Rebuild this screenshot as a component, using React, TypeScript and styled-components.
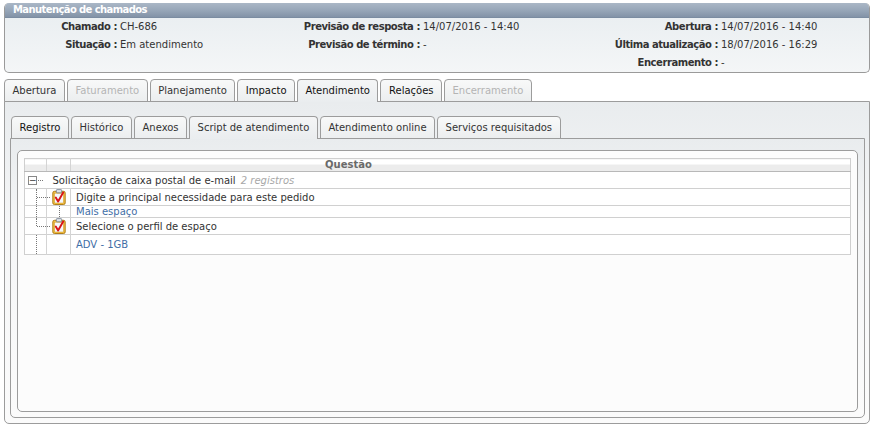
import React from 'react';
import styled, { createGlobalStyle, css } from 'styled-components';

const GlobalStyle = createGlobalStyle`
	html, body {
		margin: 0;
		padding: 0;
		background: #ffffff;
	}
	body {
		font-family: "DejaVu Sans", Verdana, sans-serif;
		font-size: 10px;
		color: #333;
	}
`;

type Field = { label: string; value: string };

const infoRows: Field[][] = [
	[
		{ label: 'Chamado :', value: 'CH-686' },
		{ label: 'Previsão de resposta :', value: '14/07/2016 - 14:40' },
		{ label: 'Abertura :', value: '14/07/2016 - 14:40' },
	],
	[
		{ label: 'Situação :', value: 'Em atendimento' },
		{ label: 'Previsão de término :', value: '-' },
		{ label: 'Última atualização :', value: '18/07/2016 - 16:29' },
	],
	[
		{ label: '', value: '' },
		{ label: '', value: '' },
		{ label: 'Encerramento :', value: '-' },
	],
];

type Tab = { title: string; active?: boolean; disabled?: boolean; strong?: boolean };

const mainTabs: Tab[] = [
	{ title: 'Abertura' },
	{ title: 'Faturamento', disabled: true },
	{ title: 'Planejamento' },
	{ title: 'Impacto', strong: true },
	{ title: 'Atendimento', active: true, strong: true },
	{ title: 'Relações', strong: true },
	{ title: 'Encerramento', disabled: true },
];

const subTabs: Tab[] = [
	{ title: 'Registro', strong: true },
	{ title: 'Histórico' },
	{ title: 'Anexos' },
	{ title: 'Script de atendimento', active: true },
	{ title: 'Atendimento online' },
	{ title: 'Serviços requisitados' },
];

function ClipboardIcon() {
	return (
		<svg width="14" height="16" viewBox="0 0 14 16">
			<rect x="0.8" y="2.3" width="12.4" height="13.2" rx="1.6" fill="#f2c044" stroke="#a8740c" strokeWidth="0.9" />
			<rect x="2.6" y="4.2" width="8.8" height="9.8" fill="#f4f8fd" stroke="#d39a26" strokeWidth="0.5" />
			<rect x="4.3" y="0.6" width="5.4" height="3.2" rx="0.8" fill="#dfe4ea" stroke="#6f7b8b" strokeWidth="0.8" />
			<path d="M3.8 8.6 L6.1 12.4 L11.2 3.6" fill="none" stroke="#d8141a" strokeWidth="1.9" strokeLinecap="round" strokeLinejoin="round" />
		</svg>
	);
}

function TabStrip({ tabs }: { tabs: Tab[] }) {
	return (
		<TabRow>
			{tabs.map(t => (
				<TabButton key={t.title} $active={t.active} $disabled={t.disabled} $strong={t.strong}>
					{t.title}
				</TabButton>
			))}
		</TabRow>
	);
}

export default function App(): JSX.Element {
	return (
		<Page>
			<GlobalStyle />
			<InfoPanel>
				<InfoHeader>Manutenção de chamados</InfoHeader>
				<InfoGrid>
					{infoRows.map((row, i) =>
						row.map((f, j) => (
							<React.Fragment key={`${i}-${j}`}>
								<FieldLabel>{f.label}</FieldLabel>
								<FieldValue>{f.value}</FieldValue>
							</React.Fragment>
						))
					)}
				</InfoGrid>
			</InfoPanel>

			<TabsBlock>
				<TabStrip tabs={mainTabs} />
				<OuterPanel>
					<TabStrip tabs={subTabs} />
					<InnerPanel>
						<ContentBox>
							<Grid>
								<thead>
									<tr>
										<HeadCell $w={21} />
										<HeadCell $w={23} />
										<HeadCell $offset={224}>Questão</HeadCell>
									</tr>
								</thead>
								<tbody>
									<GroupRow>
										<TreeCell>
											<Expander>−</Expander>
										</TreeCell>
										<GroupCell colSpan={2}>
											Solicitação de caixa postal de e-mail <Count>2 registros</Count>
										</GroupCell>
									</GroupRow>
									<DataRow $h={16}>
										<TreeCell $line="tee" />
										<IconCell><ClipboardIcon /></IconCell>
										<TextCell>Digite a principal necessidade para este pedido</TextCell>
									</DataRow>
									<DataRow $h={12}>
										<TreeCell $line="pipe" />
										<IconCell $link />
										<TextCell $answer>Mais espaço</TextCell>
									</DataRow>
									<DataRow $h={16}>
										<TreeCell $line="corner" />
										<IconCell><ClipboardIcon /></IconCell>
										<TextCell>Selecione o perfil de espaço</TextCell>
									</DataRow>
									<DataRow $h={20}>
										<TreeCell $line="pipe" />
										<IconCell />
										<TextCell $answer>ADV - 1GB</TextCell>
									</DataRow>
								</tbody>
							</Grid>
						</ContentBox>
					</InnerPanel>
				</OuterPanel>
			</TabsBlock>
		</Page>
	);
}

const Page = styled.div`
	padding: 3px 4px 6px 4px;
`;

const InfoPanel = styled.div`
	border: 1px solid #9a9a9a;
	border-top: none;
	border-radius: 5px;
	background: linear-gradient(#e8edf0, #f4f6f7);
	overflow: hidden;
`;

const InfoHeader = styled.div`
	height: 14px;
	line-height: 14px;
	padding-left: 8px;
	color: #fff;
	font-weight: bold;
	font-size: 10px;
	letter-spacing: -0.6px;
	background: linear-gradient(#aab7c6 0%, #98a7b9 50%, #8393a7 100%);
	border-bottom: 1px solid #7b8ca1;
`;

const InfoGrid = styled.div`
	display: grid;
	grid-template-columns: 112px 183px 120px 178px 120px 1fr;
	grid-auto-rows: 18px;
`;

const FieldLabel = styled.div`
	text-align: right;
	font-weight: bold;
	letter-spacing: -0.45px;
	color: #333;
	line-height: 18px;
	white-space: nowrap;
`;

const FieldValue = styled.div`
	color: #333;
	line-height: 18px;
	padding-left: 3px;
	white-space: nowrap;
`;

const TabsBlock = styled.div`
	margin-top: 6px;
`;

const TabRow = styled.div`
	display: flex;
	gap: 2px;
	align-items: flex-end;
	position: relative;
	z-index: 1;
	margin-bottom: -1px;
`;

const TabButton = styled.div<{ $active?: boolean; $disabled?: boolean; $strong?: boolean }>`
	height: 21px;
	line-height: 22px;
	padding: 0 7.5px;
	border: 1px solid #9c9c9c;
	border-radius: 4px 4px 0 0;
	background: linear-gradient(#f8f9f9, #eceeef);
	color: ${p => (p.$disabled ? '#b4b4b4' : p.$strong ? '#111' : '#333')};
	white-space: nowrap;
	${p =>
		p.$active &&
		css`
			height: 22px;
			border-bottom: none;
			background: linear-gradient(#f4f5f6, #eaedef);
		`}
`;

const OuterPanel = styled.div`
	border: 1px solid #9c9c9c;
	border-radius: 0 0 5px 5px;
	background: linear-gradient(#e9ecee, #f6f7f8 40%, #fbfbfb);
	padding: 14px 4px 5px 5px;
	& > ${TabRow} {
		margin-left: 1px;
	}
`;

const InnerPanel = styled.div`
	border: 1px solid #9c9c9c;
	border-radius: 0 0 5px 5px;
	background: linear-gradient(#e9ecee, #f5f6f7 30%, #fbfbfb);
	padding: 11px 6px 5px 6px;
`;

const ContentBox = styled.div`
	border: 1px solid #9c9c9c;
	border-radius: 5px;
	background: #fcfcfc;
	height: 262px;
	padding: 7px 6px 0 6px;
	box-sizing: border-box;
`;

const Grid = styled.table`
	width: 100%;
	border-collapse: collapse;
	border: 1px solid #cfcfcf;
	background: #fff;
	table-layout: fixed;
	font-size: 10px;
`;

const HeadCell = styled.th<{ $w?: number; $offset?: number }>`
	${p => p.$w && `width: ${p.$w}px;`}
	height: 12px;
	padding: 0 ${p => p.$offset ?? 0}px 0 0;
	line-height: 12px;
	font-weight: bold;
	color: #6a6a6a;
	text-align: center;
	vertical-align: bottom;
	border-left: 1px solid #d4d4d4;
	border-bottom: 1px solid #b8b8b8;
	background: linear-gradient(#ffffff 0 45%, #ececec 45% 100%);
	&:first-child {
		border-left: none;
	}
`;

const GroupRow = styled.tr`
	height: 17px;
	border-bottom: 1px solid #d0d0d0;
`;

const DataRow = styled.tr<{ $h: number }>`
	height: ${p => p.$h}px;
	border-bottom: 1px solid #d0d0d0;
`;

const dotted = '1px dotted #777';

const TreeCell = styled.td<{ $line?: 'tee' | 'pipe' | 'corner' }>`
	position: relative;
	padding: 0;
	border-right: ${p => (p.$line ? '1px solid #d4d4d4' : 'none')};
	&::before {
		content: '';
		position: absolute;
		left: 11px;
		top: 0;
		bottom: ${p => (p.$line === 'corner' ? '50%' : '0')};
		border-left: ${p => (p.$line ? dotted : 'none')};
	}
	&::after {
		content: '';
		position: absolute;
		z-index: 1;
		left: 12px;
		right: -4px;
		top: 50%;
		border-top: ${p => (p.$line === 'tee' || p.$line === 'corner' ? dotted : 'none')};
	}
`;

const Expander = styled.span`
	position: relative;
	display: block;
	margin-left: 3px;
	width: 7px;
	height: 7px;
	border: 1px solid #888;
	background: #fff;
	font-size: 9px;
	line-height: 6px;
	text-align: center;
	color: #333;
	&::after {
		content: '';
		position: absolute;
		left: 9px;
		top: 3px;
		width: 5px;
		border-top: ${dotted};
	}
`;

const GroupCell = styled.td`
	padding: 0 0 0 6px;
	color: #333;
	white-space: nowrap;
`;

const Count = styled.span`
	font-style: italic;
	color: #a8a8a8;
	margin-left: 2px;
`;

const IconCell = styled.td<{ $link?: boolean }>`
	position: relative;
	padding: 0;
	text-align: center;
	vertical-align: middle;
	border-right: 1px solid #d4d4d4;
	svg {
		display: block;
		margin: 0 auto;
	}
	&::before {
		content: '';
		position: absolute;
		left: 12px;
		top: 0;
		bottom: 0;
		border-left: ${p => (p.$link ? dotted : 'none')};
	}
`;

const TextCell = styled.td<{ $answer?: boolean }>`
	padding: 0 0 0 5px;
	color: ${p => (p.$answer ? '#3f6ea6' : '#333')};
	white-space: nowrap;
`;
